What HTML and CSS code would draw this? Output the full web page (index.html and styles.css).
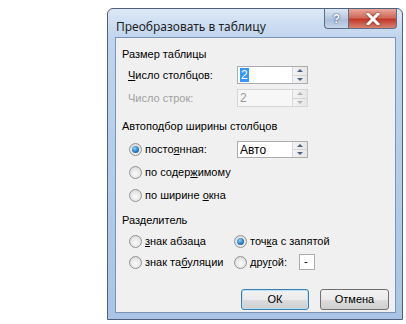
FILE: index.html
```html
<!doctype html>
<html>
<head>
<meta charset="utf-8">
<title>Преобразовать в таблицу</title>
<link rel="stylesheet" href="styles.css">
</head>
<body>

<div class="stage">
  <div class="window">

    <!-- title bar -->
    <div class="titlebar">
      <span class="title">Преобразовать в таблицу</span>
      <div class="caption-btns">
        <span class="cap-help">?</span>
        <span class="cap-close">
          <svg width="14" height="12" viewBox="0 0 14 12">
            <path d="M2 1 L12 11 M12 1 L2 11" stroke="#fff" stroke-width="3" stroke-linecap="square"/>
          </svg>
        </span>
      </div>
    </div>

    <!-- dialog body -->
    <div class="client">

      <div class="group-title">Размер таблицы</div>
      <div class="field-row">
        <span class="label"><u>Ч</u>исло столбцов:</span>
        <div class="spin">
          <span class="spin-value"><span class="selected">2</span></span>
          <span class="spin-arrows"><i class="up"></i><i class="down"></i></span>
        </div>
      </div>
      <div class="field-row disabled">
        <span class="label">Число строк:</span>
        <div class="spin">
          <span class="spin-value">2</span>
          <span class="spin-arrows"><i class="up"></i><i class="down"></i></span>
        </div>
      </div>

      <div class="group-title gap-top">Автоподбор ширины столбцов</div>
      <div class="radio-row first">
        <span class="radio checked"></span>
        <span class="radio-label fixed">посто<u>я</u>нная:</span>
        <div class="spin short">
          <span class="spin-value">Авто</span>
          <span class="spin-arrows"><i class="up"></i><i class="down"></i></span>
        </div>
      </div>
      <div class="radio-row">
        <span class="radio"></span>
        <span class="radio-label">по содер<u>ж</u>имому</span>
      </div>
      <div class="radio-row">
        <span class="radio"></span>
        <span class="radio-label">по ширине <u>о</u>кна</span>
      </div>

      <div class="group-title gap-top2">Разделитель</div>
      <div class="sep-grid">
        <div class="radio-row">
          <span class="radio"></span>
          <span class="radio-label"><u>з</u>нак абзаца</span>
        </div>
        <div class="radio-row">
          <span class="radio checked"></span>
          <span class="radio-label">точ<u>к</u>а с запятой</span>
        </div>
        <div class="radio-row">
          <span class="radio"></span>
          <span class="radio-label">знак та<u>б</u>уляции</span>
        </div>
        <div class="radio-row">
          <span class="radio"></span>
          <span class="radio-label other">дру<u>г</u>ой:</span>
          <span class="char-box">-</span>
        </div>
      </div>

      <div class="buttons">
        <button class="btn default">ОК</button>
        <button class="btn">Отмена</button>
      </div>

    </div>
  </div>
</div>

</body>
</html>
```

FILE: styles.css
```css
/* ---------- page ---------- */
html,body{margin:0;background:#fff}
body{font:11px/14px "Liberation Sans",Arial,sans-serif;color:#000}

.stage{padding:8px 0 0 107px}

/* ---------- window frame ---------- */
.window{
  width:296px;
  box-sizing:border-box;
  border:1px solid #4f6079;
  border-radius:6px 6px 0 0;
  background:linear-gradient(180deg,#dce8f6 0,#bfd4ed 30px,#aac4e7 100%);
  padding:0 6px 6px 7px;
}

.titlebar{
  height:28px;
  display:flex;
  align-items:flex-start;
  justify-content:space-between;
}
.title{
  font:12px/1 "Noto Sans","DejaVu Sans",sans-serif;
  color:#1e1e1e;
  padding:12px 0 0 1px;
}

.caption-btns{display:flex;margin-right:-1px}
.cap-help,.cap-close{
  height:19px;
  display:flex;align-items:center;justify-content:center;
  border:1px solid #5d6e86;
  border-top:0;
}
.cap-help{
  width:23px;
  border-radius:0 0 0 4px;
  border-right:0;
  background:linear-gradient(180deg,#dce7f5,#b5c9e2 50%,#a7bcd8 51%,#c6d6ea);
  color:#fff;
  font:bold 12px/1 "Liberation Sans",sans-serif;
  text-shadow:0 0 2px #3b4f6b,0 0 1px #3b4f6b;
}
.cap-close{
  width:47px;
  border-radius:0 0 4px 0;
  background:linear-gradient(180deg,#e8a89c,#d16a5a 45%,#c0392b 55%,#d9836f);
}
.cap-close svg{filter:drop-shadow(0 0 1px #6b1a10)}

/* ---------- client area ---------- */
.client{
  height:276px;
  background:#f0f0f0;
  border:1px solid #7b93b6;
  padding:0 6px;
  box-sizing:border-box;
}

.group-title{margin-top:9px;height:14px}
.group-title.gap-top{margin-top:12px}
.group-title.gap-top2{margin-top:9px}

/* label + spinner rows */
.field-row{
  display:flex;align-items:center;
  height:18px;margin-top:5px;
  padding-left:6px;
}
.field-row .label{width:109px}
.field-row.disabled .label{color:#a0a0a0}

.spin{
  display:flex;
  width:71px;height:18px;
  box-sizing:border-box;
  border:1px solid #abadb3;
  background:#fff;
}
.spin.short{height:17px}
.spin-value{flex:1;padding-left:2px;line-height:16px;font-size:12px}
.spin-value .selected{background:#3399ff;color:#fff;padding:0 1px}
.spin-arrows{
  width:14px;
  display:flex;flex-direction:column;
  border-left:1px solid #d8d8d8;
  background:linear-gradient(90deg,#f4f4f4,#e6e6e6);
}
.spin-arrows i{flex:1;display:flex;align-items:center;justify-content:center}
.spin-arrows i::before{
  content:"";
  border-left:3px solid transparent;
  border-right:3px solid transparent;
}
.spin-arrows .up{border-bottom:1px solid #d4d4d4}
.spin-arrows .up::before{border-bottom:3px solid #4d6185}
.spin-arrows .down::before{border-top:3px solid #4d6185}

.disabled .spin{border-color:#d6d6d6;background:#f7f7f7;color:#9a9a9a}
.disabled .spin-arrows .up::before{border-bottom-color:#b4b4b4}
.disabled .spin-arrows .down::before{border-top-color:#b4b4b4}

/* radio rows */
.radio-row{
  display:flex;align-items:center;
  height:18px;margin-top:5px;
  padding-left:7px;
}
.radio-row.first{margin-top:7px}
.radio{
  width:13px;height:13px;
  box-sizing:border-box;
  border:1px solid #939393;
  border-radius:50%;
  background:radial-gradient(circle at 50% 60%,#fbfbfb 0,#e4e4e4 60%,#cfcfcf 100%);
  display:flex;align-items:center;justify-content:center;
  flex:none;
}
.radio.checked::after{
  content:"";
  width:7px;height:7px;border-radius:50%;
  background:radial-gradient(circle at 40% 35%,#8dd4ff 0,#2b7bc0 55%,#154a7a 100%);
}
.radio-label{margin-left:3px;white-space:nowrap}
.radio-label.fixed{width:92px}
.radio-label.other{width:49px}

.sep-grid{
  display:grid;
  grid-template-columns:112px auto;
  row-gap:3px;
  margin-top:5px;
}
.sep-grid .radio-row{margin-top:0}
.sep-grid .radio-row:nth-child(even){padding-left:0}

.char-box{
  width:16px;height:16px;
  box-sizing:border-box;
  border:1px solid #abadb3;
  background:#fff;
  padding-left:4px;
  line-height:13px;
}

/* dialog buttons */
.buttons{
  display:flex;justify-content:flex-end;
  gap:11px;
  margin-top:18px;
}
.btn{
  height:21px;
  width:68px;
  font:11px/1 "Liberation Sans",Arial,sans-serif;
  color:#000;
  border:1px solid #707070;
  border-radius:3px;
  background:linear-gradient(180deg,#f2f2f2 0,#ebebeb 50%,#dddddd 51%,#cfcfcf 100%);
  padding:0;
}
.btn + .btn{width:69px}
.btn.default{
  border-color:#3c7fb1;
  box-shadow:inset 0 0 0 1px #b9e2f7;
}
```
